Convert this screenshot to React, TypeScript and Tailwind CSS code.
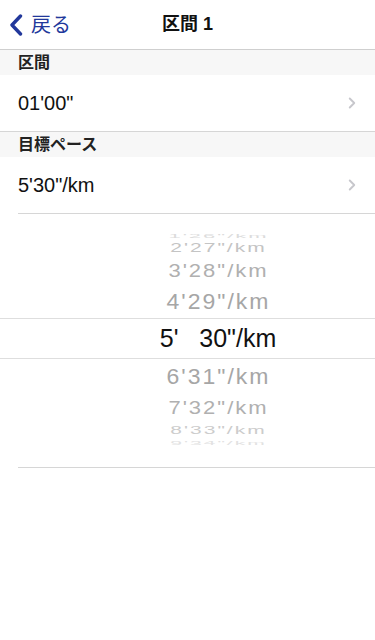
import { ChevronRight } from 'lucide-react'

const jp = { fontFamily: '"Liberation Sans", "Noto Sans CJK JP", sans-serif' }

function SectionHeader({ label }: { label: string }) {
  return (
    <div className="h-[25px] bg-[#f7f7f7] px-[18px] flex items-center">
      <span className="text-[16px] font-bold text-[#222]">{label}</span>
    </div>
  )
}

export default function App() {
  return (
    <div className="w-[375px] h-[640px] bg-white overflow-hidden" style={jp}>
      {/* nav bar */}
      <div className="relative h-[50px] border-b border-[#cfcfcf] flex items-center justify-center">
        <button className="absolute left-[8px] top-0 h-full flex items-center gap-[7px] text-[#22389b]">
          <svg width="16" height="22" viewBox="0 0 16 22" fill="none">
            <path d="M12.5 2 L4 11 L12.5 20" stroke="currentColor" strokeWidth="3.4" strokeLinecap="round" strokeLinejoin="round" />
          </svg>
          <span className="text-[20px]">戻る</span>
        </button>
        <h1 className="text-[18px] font-bold text-[#111]">区間 1</h1>
      </div>

      <SectionHeader label="区間" />
      <div className="border-b border-[#d6d6d6]">
        <div className="h-[56px] flex items-center pl-[18px] pr-[14px]">
          <span className="text-[20px] text-[#111] flex-1">01'00"</span>
          <ChevronRight size={18} strokeWidth={2.5} className="text-[#c7c7cc]" />
        </div>
      </div>
      <SectionHeader label="目標ペース" />
      <div className="ml-[18px] border-b border-[#d6d6d6]">
        <div className="h-[56px] flex items-center pr-[14px]">
          <span className="text-[20px] text-[#111] flex-1">5'30"/km</span>
          <ChevronRight size={18} strokeWidth={2.5} className="text-[#c7c7cc]" />
        </div>
      </div>

      {/* picker */}
      <div className="h-[253px] flex flex-col items-center pt-[18px]" style={{ fontFamily: '"Liberation Sans", sans-serif' }}>
        <div className="h-[8px] flex items-center text-[22px] tracking-[2px] text-[#dcdcdc] scale-y-[0.25] translate-x-[31px]">1'26"/km</div>
        <div className="h-[16px] flex items-center text-[21px] tracking-[2px] text-[#c4c4c4] scale-y-[0.6] translate-x-[31px]">2'27"/km</div>
        <div className="h-[28px] flex items-center text-[22px] tracking-[2px] text-[#b0b0b0] scale-y-[0.82] translate-x-[31px]">3'28"/km</div>
        <div className="h-[34px] flex items-center text-[23px] tracking-[2px] text-[#a6a6a6] scale-y-[0.95] translate-x-[31px]">4'29"/km</div>
        <div className="w-full h-[41px] border-y border-[#dedede] flex items-center justify-center pl-[61px]">
          <span className="text-[25px] text-[#111] whitespace-pre">5'   30"/km</span>
        </div>
        <div className="h-[34px] flex items-center text-[23px] tracking-[2px] text-[#a6a6a6] scale-y-[0.95] translate-x-[31px]">6'31"/km</div>
        <div className="h-[28px] flex items-center text-[22px] tracking-[2px] text-[#b0b0b0] scale-y-[0.82] translate-x-[31px]">7'32"/km</div>
        <div className="h-[18px] flex items-center text-[21px] tracking-[2px] text-[#cccccc] scale-y-[0.55] translate-x-[31px]">8'33"/km</div>
        <div className="h-[8px] flex items-center text-[21px] tracking-[2px] text-[#e2e2e2] scale-y-[0.25] translate-x-[31px]">9'34"/km</div>
      </div>
      <div className="ml-[18px] border-b border-[#d6d6d6]" />
    </div>
  )
}
